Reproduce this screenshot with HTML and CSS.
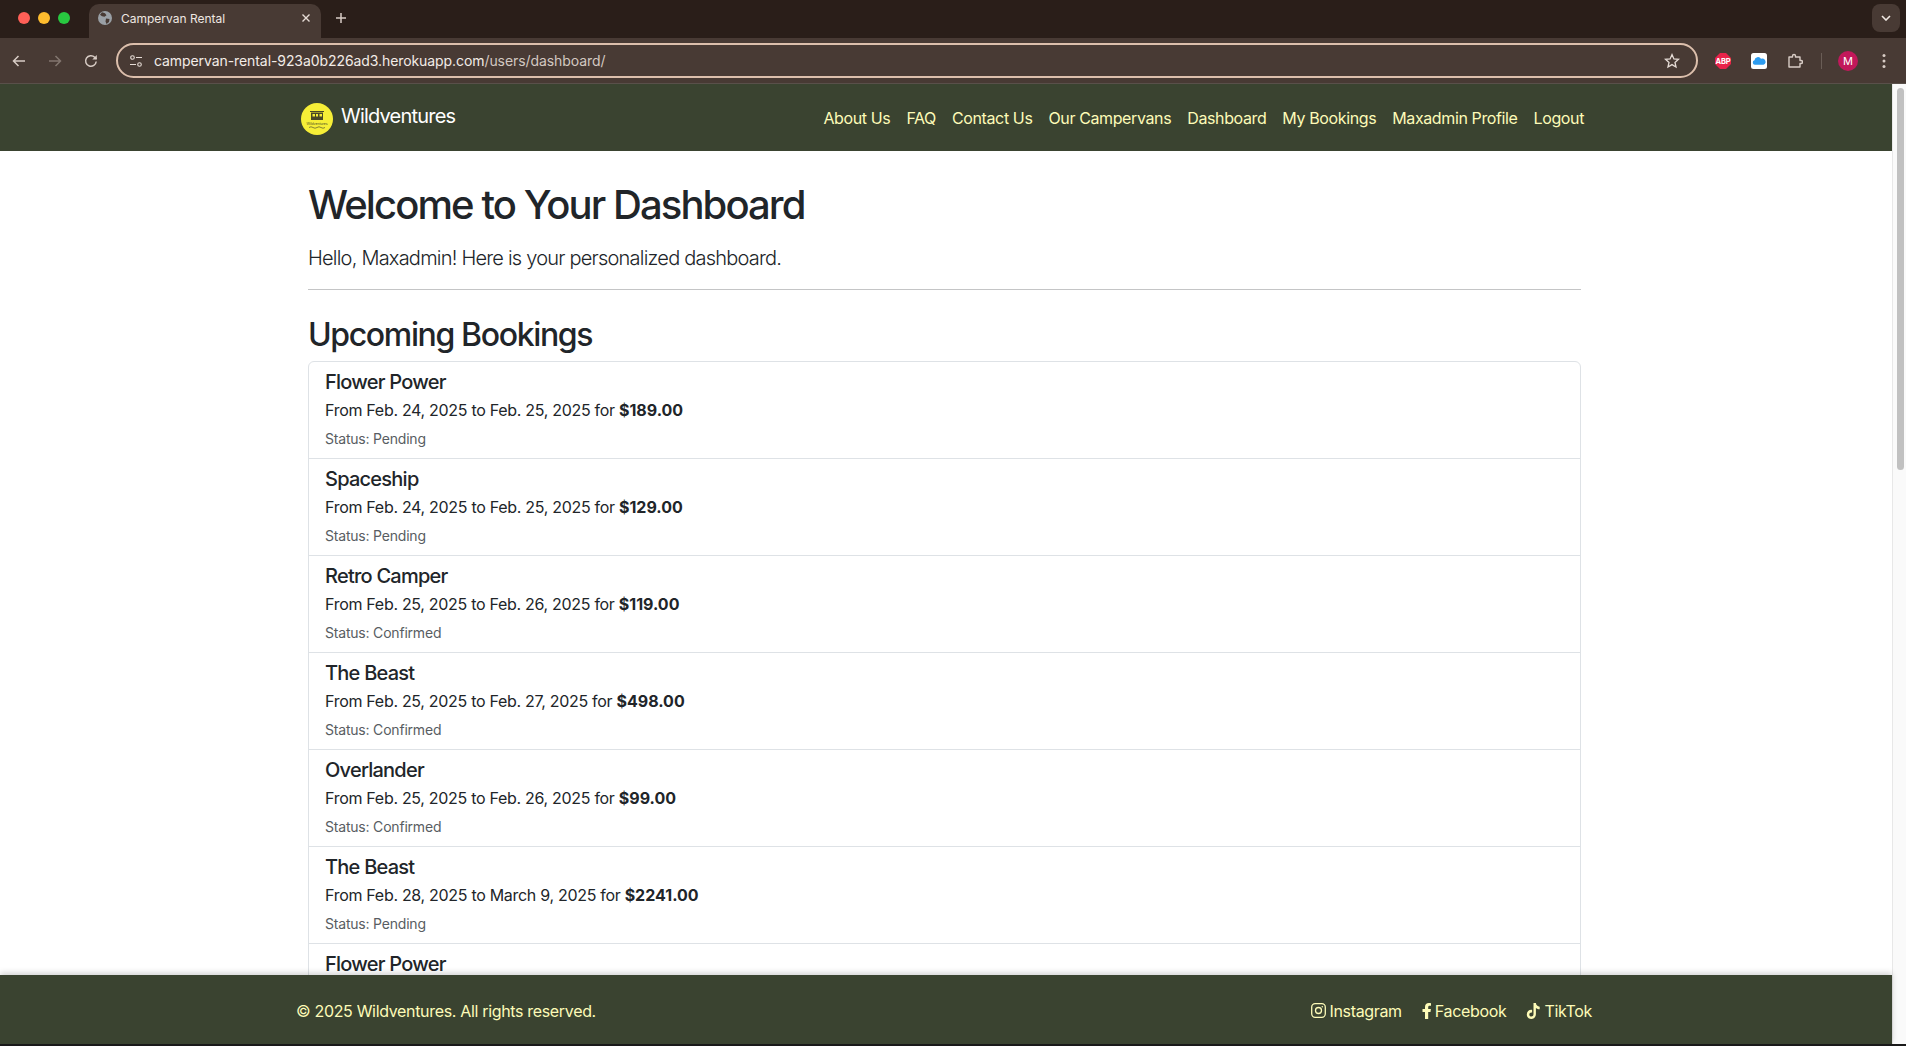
FILE: index.html
```html
<!DOCTYPE html>
<html lang="en">
<head>
    <meta charset="UTF-8">
    <meta name="viewport" content="width=device-width, initial-scale=1.0">
    <title>Campervan Rental</title>
    <link rel="stylesheet" href="styles.css">
</head>
<body>
    <div class="tab-strip">
        <div class="traffic-lights">
            <span class="light light-red"></span>
            <span class="light light-yellow"></span>
            <span class="light light-green"></span>
        </div>
        <div class="tab">
            <svg class="tab-globe" width="16" height="16" viewBox="0 0 16 16">
                <circle cx="8" cy="8" r="7" fill="#9aa0a6"/>
                <path d="M5 2.2l3 1 1.500 2-2 1.500-2.500-.5-2-1.500zM9 8.500l3.500.5-.5 3-2.500 2-1-2.500z" fill="#483a34"/>
            </svg>
            <span class="tab-title">Campervan Rental</span>
            <svg class="tab-close" width="10" height="10" viewBox="0 0 10 10">
                <path d="M1.500 1.500l7 7M8.500 1.500l-7 7" stroke="#e6dcd6" stroke-width="1.400" fill="none"/>
            </svg>
        </div>
        <svg class="new-tab" width="12" height="12" viewBox="0 0 12 12">
            <path d="M6 1v10M1 6h10" stroke="#d8ccc5" stroke-width="1.500" fill="none"/>
        </svg>
        <div class="tab-search">
            <svg width="10" height="6" viewBox="0 0 10 6">
                <path d="M1 1l4 4 4-4" stroke="#f0e8e3" stroke-width="1.600" fill="none"/>
            </svg>
        </div>
    </div>

    <div class="toolbar">
        <div class="tool-btn">
            <svg width="16" height="16" viewBox="0 0 16 16"><path d="M14 8H2.500M7.500 3l-5 5 5 5" stroke="#d8ccc5" stroke-width="1.500" fill="none"/></svg>
        </div>
        <div class="tool-btn">
            <svg width="16" height="16" viewBox="0 0 16 16"><path d="M2 8h11.500M8.500 3l5 5-5 5" stroke="#83766f" stroke-width="1.500" fill="none"/></svg>
        </div>
        <div class="tool-btn">
            <svg width="16" height="16" viewBox="0 0 16 16"><path d="M13.200 8.500a5.300 5.300 0 1 1-1.500-4.200L13.500 6" stroke="#d8ccc5" stroke-width="1.500" fill="none"/><path d="M13.800 2v4.500H9.300z" fill="#d8ccc5"/></svg>
        </div>
        <div class="omnibox">
            <svg class="site-icon" width="14" height="14" viewBox="0 0 14 14">
                <circle cx="3.500" cy="3.500" r="1.800" stroke="#e6dcd6" stroke-width="1.100" fill="none"/>
                <path d="M7 3.500h6M1 10.500h6" stroke="#e6dcd6" stroke-width="1.100"/>
                <circle cx="10.500" cy="10.500" r="1.800" stroke="#e6dcd6" stroke-width="1.100" fill="none"/>
            </svg>
            <span class="url"><span class="url-host">campervan-rental-923a0b226ad3.herokuapp.com</span>/users/dashboard/</span>
            <svg class="star" width="16" height="16" viewBox="0 0 16 16">
                <path d="M8 1.600l1.900 4.300 4.600.4-3.500 3.100 1 4.600L8 11.600 4 14l1-4.600-3.500-3.100 4.600-.4z" stroke="#e6dcd6" stroke-width="1.300" fill="none"/>
            </svg>
        </div>
        <div class="extensions">
            <div class="tool-btn">
                <svg width="16" height="16" viewBox="0 0 16 16">
                    <path d="M5 0h6l5 5v6l-5 5H5l-5-5V5z" fill="#e8234a"/>
                    <text x="8" y="10.800" class="abp-text" text-anchor="middle">ABP</text>
                </svg>
            </div>
            <div class="tool-btn">
                <svg width="16" height="16" viewBox="0 0 16 16">
                    <rect width="16" height="16" rx="2.500" fill="#fff"/>
                    <path d="M3.800 11.800a2.300 2.300 0 0 1-.3-4.500 3.500 3.500 0 0 1 6.500-1.500 2.900 2.900 0 0 1 2.500 6z" fill="#2d9cf0"/>
                </svg>
            </div>
            <div class="tool-btn">
                <svg width="16" height="16" viewBox="0 0 16 16">
                    <path d="M2 4h3.500V3a1.500 1.500 0 0 1 3 0v1H13v3.500h1a1.500 1.500 0 0 1 0 3h-1V14H2z" stroke="#d8ccc5" stroke-width="1.400" stroke-linejoin="round" fill="none"/>
                </svg>
            </div>
            <span class="tool-sep"></span>
            <div class="tool-btn"><span class="avatar">M</span></div>
            <div class="tool-btn">
                <svg width="4" height="16" viewBox="0 0 4 16">
                    <circle cx="2" cy="2.500" r="1.500" fill="#d8ccc5"/>
                    <circle cx="2" cy="8" r="1.500" fill="#d8ccc5"/>
                    <circle cx="2" cy="13.500" r="1.500" fill="#d8ccc5"/>
                </svg>
            </div>
        </div>
    </div>

    <div class="window">
        <div class="page">
            <nav class="navbar">
                <a class="brand">
                    <svg class="brand-logo" width="32" height="32" viewBox="0 0 32 32">
                        <circle cx="16" cy="16" r="16" fill="#f6ee37"/>
                        <path d="M9 8h14v1H9zM10 9.500h12v7.500H10z" fill="#4a4826"/>
                        <path d="M11.500 11h2.500v2.500h-2.500zM15 11h2v2.500h-2zM18.500 11h2.500v2.500h-2.500z" fill="#f6ee37"/>
                        <text x="16" y="21.500" class="logo-text" text-anchor="middle">Wildventures</text>
                        <path d="M8 24.500q2-1.500 4 0t4 0 4 0 4 0" stroke="#6a6830" stroke-width=".8" fill="none"/>
                    </svg>
                    <span class="brand-name">Wildventures</span>
                </a>
                <ul class="nav-links">
                    <li>About Us</li>
                    <li>FAQ</li>
                    <li>Contact Us</li>
                    <li>Our Campervans</li>
                    <li>Dashboard</li>
                    <li>My Bookings</li>
                    <li>Maxadmin Profile</li>
                    <li>Logout</li>
                </ul>
            </nav>

            <main class="content">
                <h1>Welcome to Your Dashboard</h1>
                <p class="lead">Hello, Maxadmin! Here is your personalized dashboard.</p>
                <hr>
                <h2>Upcoming Bookings</h2>
                <ul class="booking-list">
                    <li class="booking">
                        <h5>Flower Power</h5>
                        <p>From Feb. 24, 2025 to Feb. 25, 2025 for <strong>$189.00</strong></p>
                        <div class="status">Status: Pending</div>
                    </li>
                    <li class="booking">
                        <h5>Spaceship</h5>
                        <p>From Feb. 24, 2025 to Feb. 25, 2025 for <strong>$129.00</strong></p>
                        <div class="status">Status: Pending</div>
                    </li>
                    <li class="booking">
                        <h5>Retro Camper</h5>
                        <p>From Feb. 25, 2025 to Feb. 26, 2025 for <strong>$119.00</strong></p>
                        <div class="status">Status: Confirmed</div>
                    </li>
                    <li class="booking">
                        <h5>The Beast</h5>
                        <p>From Feb. 25, 2025 to Feb. 27, 2025 for <strong>$498.00</strong></p>
                        <div class="status">Status: Confirmed</div>
                    </li>
                    <li class="booking">
                        <h5>Overlander</h5>
                        <p>From Feb. 25, 2025 to Feb. 26, 2025 for <strong>$99.00</strong></p>
                        <div class="status">Status: Confirmed</div>
                    </li>
                    <li class="booking">
                        <h5>The Beast</h5>
                        <p>From Feb. 28, 2025 to March 9, 2025 for <strong>$2241.00</strong></p>
                        <div class="status">Status: Pending</div>
                    </li>
                    <li class="booking">
                        <h5>Flower Power</h5>
                    </li>
                </ul>
            </main>

            <footer class="footer">
                <span class="copyright">© 2025 Wildventures. All rights reserved.</span>
                <div class="social">
                    <a>
                        <svg width="15" height="15" viewBox="0 0 15 15">
                            <rect x=".7" y=".7" width="13.600" height="13.600" rx="3.500" stroke="#fdfbb8" stroke-width="1.300" fill="none"/>
                            <circle cx="7.500" cy="7.500" r="3" stroke="#fdfbb8" stroke-width="1.300" fill="none"/>
                            <circle cx="11.300" cy="3.700" r=".8" fill="#fdfbb8"/>
                        </svg>
                        Instagram
                    </a>
                    <a>
                        <svg width="10" height="16" viewBox="0 0 10 16">
                            <path d="M3 16V9H.5V6H3V4c0-2.500 1.500-4 3.800-4 1 0 2.200.2 2.200.2v2.500H7.700C6.500 2.700 6.200 3.400 6.200 4.200V6h2.700l-.4 3H6.200v7z" fill="#fdfbb8"/>
                        </svg>
                        Facebook
                    </a>
                    <a>
                        <svg width="15" height="16" viewBox="0 0 15 16">
                            <path d="M7.500 0h2.400c.2 2 1.600 3.500 3.800 3.700v2.500c-1.400 0-2.700-.5-3.800-1.300v6.100C9.900 13.700 8 16 5.300 16 2.700 16 .8 14 .8 11.400c0-2.900 2.500-5 5.300-4.500v2.600c-1.400-.4-2.800.6-2.800 1.900 0 1.300 1 2.200 2 2.200 1.200 0 2.200-1 2.200-2.300z" fill="#fdfbb8"/>
                        </svg>
                        TikTok
                    </a>
                </div>
            </footer>
        </div>

        <div class="scrollbar">
            <div class="scroll-thumb"></div>
        </div>
    </div>
</body>
</html>
```

FILE: styles.css
```css
* {
    box-sizing: border-box;
}
html, body {
    height: 100%;
}
body {
    margin: 0;
    display: flex;
    flex-direction: column;
    overflow: hidden;
    background: #1a1a1a;
    color: #212529;
    font-family: 'Inter', 'Liberation Sans', sans-serif;
}

/* browser chrome */
.tab-strip {
    height: 38px;
    flex: none;
    display: flex;
    align-items: flex-end;
    background: #2a1e19;
    padding-left: 18px;
}
.traffic-lights {
    display: flex;
    gap: 8px;
    align-self: flex-start;
    margin-top: 12px;
    margin-right: 19px;
}
.light {
    width: 12px;
    height: 12px;
    border-radius: 50%;
}
.light-red { background: #ff5f57; }
.light-yellow { background: #febc2e; }
.light-green { background: #28c840; }
.tab {
    width: 232px;
    height: 34px;
    display: flex;
    align-items: center;
    padding: 0 10px 6px 8px;
    background: #483a34;
    border-radius: 10px 10px 0 0;
    color: #efe7e2;
    font-size: 12px;
}
.tab-globe {
    margin-right: 8px;
}
.tab-title {
    flex: 1;
}
.new-tab {
    align-self: flex-start;
    margin-top: 12px;
    margin-left: 14px;
}
.tab-search {
    margin-left: auto;
    margin-right: 6px;
    align-self: flex-start;
    margin-top: 4px;
    width: 28px;
    height: 28px;
    display: flex;
    align-items: center;
    justify-content: center;
    background: #483a34;
    border-radius: 8px;
}
.toolbar {
    height: 46px;
    flex: none;
    display: flex;
    align-items: center;
    padding-left: 1px;
    background: #483a34;
    border-bottom: 1px solid #59504a;
}
.tool-btn {
    width: 36px;
    height: 36px;
    flex: none;
    display: flex;
    align-items: center;
    justify-content: center;
}
.omnibox {
    flex: 1;
    height: 35px;
    margin-left: 7px;
    display: flex;
    align-items: center;
    padding: 0 16px 0 11px;
    border: 2px solid #dcbfac;
    border-radius: 18px;
    font-size: 14px;
    letter-spacing: -0.08px;
    color: #d3c8c1;
}
.site-icon {
    margin-right: 11px;
}
.url {
    flex: 1;
}
.url-host {
    color: #f3ece7;
}
.extensions {
    width: 208px;
    flex: none;
    display: flex;
    align-items: center;
    padding-left: 7px;
}
.tool-sep {
    width: 1px;
    height: 16px;
    margin: 0 8px;
    background: #6a5d56;
}
.avatar {
    width: 20px;
    height: 20px;
    display: flex;
    align-items: center;
    justify-content: center;
    border-radius: 50%;
    background: #c2185b;
    color: #fff;
    font-size: 11px;
}
.abp-text {
    fill: #fff;
    font-size: 7.5px;
    font-weight: 700;
    letter-spacing: -0.2px;
}

/* page */
.window {
    flex: 1;
    min-height: 0;
    display: flex;
    margin-bottom: 2px;
    background: #fff;
}
.page {
    flex: 1;
    min-width: 0;
    display: flex;
    flex-direction: column;
}
.scrollbar {
    width: 14px;
    flex: none;
    padding: 4px 2px 0 4px;
    background: #fafafa;
    border-left: 1px solid #e8e8e8;
}
.scroll-thumb {
    height: 382px;
    background: #c1c1c1;
    border-radius: 4px;
}
.navbar {
    height: 67px;
    flex: none;
    display: flex;
    align-items: center;
    justify-content: space-between;
    padding: 0 308px 0 301px;
    background: #3a4330;
}
.brand {
    display: flex;
    align-items: center;
    gap: 8px;
    margin-top: 2px;
    color: #fff;
    font-size: 20px;
    letter-spacing: -0.8px;
}
.brand-name {
    margin-bottom: 5px;
}
.logo-text {
    fill: #4a4826;
    font-size: 3.4px;
    letter-spacing: 0;
}
.nav-links {
    display: flex;
    gap: 16px;
    margin: 0;
    padding: 0;
    list-style: none;
    color: #fdfbb8;
    font-size: 16px;
    letter-spacing: -0.38px;
}
.content {
    flex: 1;
    min-height: 0;
    overflow: hidden;
    padding: 30px 311px 0 308px;
}
h1 {
    margin: 0 0 15px;
    font-size: 40px;
    font-weight: 500;
    line-height: 1.2;
    letter-spacing: -1.9px;
}
.lead {
    margin: 0 0 16px;
    font-size: 20px;
    font-weight: 300;
    line-height: 29px;
    letter-spacing: -0.78px;
}
hr {
    margin: 16px 0 26px;
    border: 0;
    border-top: 1px solid #c4c5c6;
}
h2 {
    margin: 0 0 7px;
    font-size: 32px;
    font-weight: 500;
    line-height: 1.2;
    letter-spacing: -1.36px;
}
.booking-list {
    margin: 0;
    padding: 0;
    list-style: none;
    border: 1px solid #dee2e6;
    border-radius: 6px;
}
.booking {
    padding: 8px 16px;
    border-bottom: 1px solid #dee2e6;
}
.booking h5 {
    margin: 0 0 4px;
    font-size: 20px;
    font-weight: 500;
    line-height: 24px;
    letter-spacing: -0.76px;
}
.booking p {
    margin: 0 0 5px;
    font-size: 16px;
    line-height: 24px;
    letter-spacing: -0.3px;
}
.booking strong {
    font-weight: 700;
    letter-spacing: 0;
}
.status {
    font-size: 14px;
    line-height: 23px;
    letter-spacing: -0.2px;
    color: #585d62;
}
.footer {
    height: 69px;
    flex: none;
    display: flex;
    align-items: center;
    justify-content: space-between;
    padding: 2px 300px 0 296px;
    background: #3a4330;
    box-shadow: 0 -2px 6px rgba(0, 0, 0, 0.18);
    position: relative;
    color: #fdfbb8;
    font-size: 16px;
    letter-spacing: -0.33px;
}
.social {
    display: flex;
    gap: 20px;
}
.social a {
    display: flex;
    align-items: center;
    gap: 3px;
}
```
